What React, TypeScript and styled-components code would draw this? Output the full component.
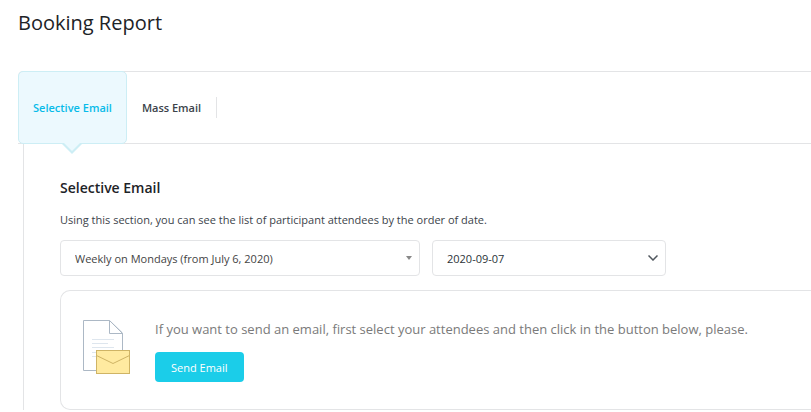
import React, { useState } from "react";
import styled, { createGlobalStyle } from "styled-components";

const GlobalStyle = createGlobalStyle`
  *, *::before, *::after { box-sizing: border-box; }
  html, body { margin: 0; background: #fff; }
  body, button, select { font-family: "Segoe UI", "Open Sans", "Noto Sans", sans-serif; }
`;

const Page = styled.main`
  padding: 8px 0 0 18px;
  color: #1d2327;
`;

const Title = styled.h1`
  margin: 0 0 33px;
  font-size: 20px;
  line-height: 30px;
  font-weight: 400;
`;

const TabBar = styled.nav`
  display: flex;
  height: 73px;
  border-top: 1px solid #e3e4e6;
  border-bottom: 1px solid #e3e4e6;
  border-top-left-radius: 5px;
`;

const Tab = styled.button<{ $active?: boolean }>`
  position: relative;
  display: flex;
  align-items: center;
  justify-content: center;
  padding: 0 14px;
  margin: ${(p) => (p.$active ? "-1px 0" : "0")};
  border: 1px solid ${(p) => (p.$active ? "#cdeef5" : "transparent")};
  border-radius: 5px;
  background: ${(p) => (p.$active ? "#ecf9fe" : "transparent")};
  color: ${(p) => (p.$active ? "#07bbe9" : "#3c434a")};
  font-size: 11px;
  line-height: 18px;
  font-weight: 600;
  white-space: nowrap;
  cursor: pointer;
`;

const Divider = styled.span`
  align-self: center;
  width: 1px;
  height: 21px;
  background: #e3e4e6;
`;

const Pointer = styled.svg`
  position: absolute;
  top: 100%;
  left: 50%;
  width: 22px;
  height: 12px;
  margin-left: -11px;
`;

const Panel = styled.section`
  margin-left: 5px;
  padding: 32px 0 0 36px;
  border-left: 1px solid #e3e4e6;
`;

const Heading = styled.h2`
  margin: 0 0 12px;
  font-size: 14px;
  line-height: 24px;
  font-weight: 600;
`;

const Description = styled.p`
  margin: 0 0 12px;
  color: #3c434a;
  font-size: 11px;
  line-height: 16px;
`;

const Filters = styled.div`
  display: flex;
  gap: 12px;
  margin-bottom: 14px;
`;

const Field = styled.label<{ $width: number }>`
  position: relative;
  flex: 0 1 ${(p) => p.$width}px;
`;

const Select = styled.select<{ $dark?: boolean }>`
  appearance: none;
  display: block;
  width: 100%;
  height: 36px;
  padding: 0 32px 0 14px;
  border: 1px solid #e3e4e6;
  border-radius: 4px;
  background: #fff;
  color: ${(p) => (p.$dark ? "#2c3338" : "#444")};
  font-size: 11px;
`;

const Arrow = styled.svg`
  position: absolute;
  top: 50%;
  right: 8px;
  transform: translateY(-50%);
  pointer-events: none;
`;

const Card = styled.div`
  display: flex;
  align-items: flex-start;
  gap: 24px;
  padding: 28px 16px 27px 22px;
  border: 1px solid #e3e4e6;
  border-right: 0;
  border-radius: 10px 0 0 10px;
`;

const MailIcon = styled.svg`
  flex: none;
  width: 48px;
  height: 56px;
`;

const Message = styled.p`
  margin: 0 0 13px;
  color: #7a7a7a;
  font-size: 13px;
  line-height: 20px;
`;

const SendButton = styled.button`
  display: block;
  height: 30px;
  padding: 0 16px;
  border: 0;
  border-radius: 4px;
  background: #1bcde9;
  color: #fff;
  font-size: 11px;
  cursor: pointer;
`;

function DocumentMail() {
  return (
    <MailIcon viewBox="0 0 48 56" aria-hidden="true">
      <path d="M0.5 1.5H26.5L39.5 14V51.5H0.5Z" fill="#fff" stroke="#acb8c5" />
      <path d="M26.5 1.5V14.5H39.5Z" fill="#fff" stroke="#acb8c5" strokeLinejoin="round" />
      <path d="M9 20.5H31M9 24.5H25M9 28.5H31M9 33.5H23M9 37.5H14" stroke="#dee6ee" />
      <rect x="13.5" y="31.5" width="33" height="23" fill="#ffeaa0" stroke="#cfb465" />
      <path d="M13.5 36.5L30 44.5L46.5 36.5" fill="none" stroke="#cfb465" />
    </MailIcon>
  );
}

export default function App() {
  const [tab, setTab] = useState("selective");
  const tabs = [
    { id: "selective", label: "Selective Email" },
    { id: "mass", label: "Mass Email" },
  ];
  return (
    <>
      <GlobalStyle />
      <Page>
        <Title>Booking Report</Title>
        <TabBar>
          {tabs.map(({ id, label }) => (
            <Tab key={id} $active={tab === id} aria-pressed={tab === id} onClick={() => setTab(id)}>
              {label}
              {tab === id && (
                <Pointer viewBox="0 0 22 12" aria-hidden="true">
                  <path d="M0 0L11 11L22 0Z" fill="#cdeef5" />
                  <path d="M3 0L11 8L19 0Z" fill="#ecf9fe" />
                </Pointer>
              )}
            </Tab>
          ))}
          <Divider />
        </TabBar>
        <Panel>
          <Heading>Selective Email</Heading>
          <Description>
            Using this section, you can see the list of participant attendees by the order of date.
          </Description>
          <Filters>
            <Field $width={360}>
              <Select aria-label="Event">
                <option>Weekly on Mondays (from July 6, 2020)</option>
              </Select>
              <Arrow width="6" height="4" viewBox="0 0 6 4" aria-hidden="true">
                <path d="M0 0H6L3 4Z" fill="#888" />
              </Arrow>
            </Field>
            <Field $width={234}>
              <Select $dark aria-label="Date">
                <option>2020-09-07</option>
              </Select>
              <Arrow width="10" height="6" viewBox="0 0 10 6" aria-hidden="true">
                <path d="M0.5 0.5L5 5L9.5 0.5" fill="none" stroke="#50575e" strokeWidth="1.5" />
              </Arrow>
            </Field>
          </Filters>
          <Card>
            <DocumentMail />
            <div>
              <Message>
                If you want to send an email, first select your attendees and then click in the button below, please.
              </Message>
              <SendButton>Send Email</SendButton>
            </div>
          </Card>
        </Panel>
      </Page>
    </>
  );
}
